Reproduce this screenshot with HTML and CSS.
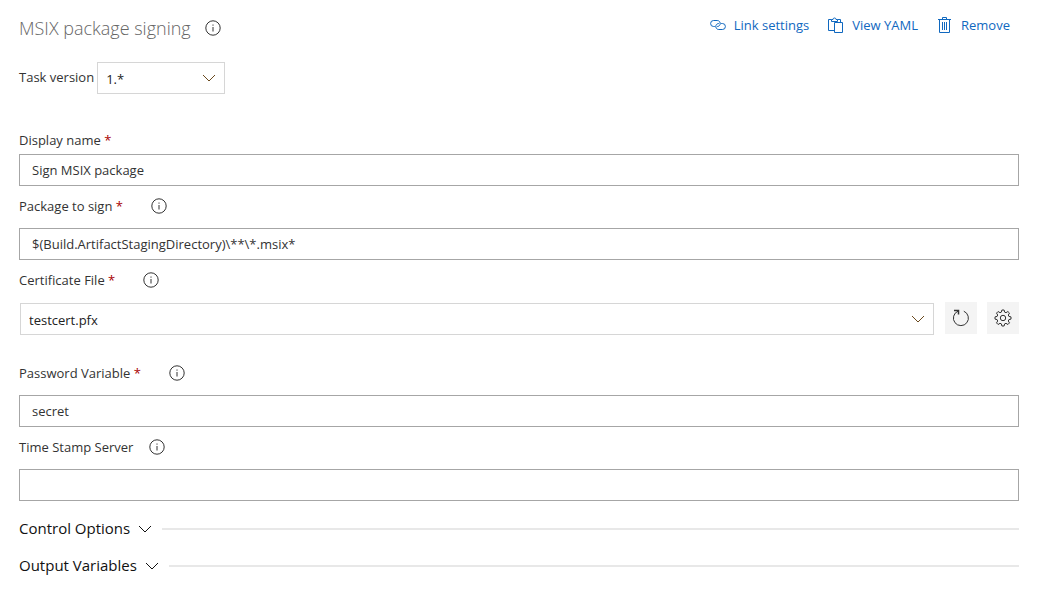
FILE: index.html
```
<!DOCTYPE html>
<html lang="en">

<head>
    <meta charset="UTF-8">
    <meta name="viewport" content="width=device-width, initial-scale=1.0">
    <title>MSIX package signing</title>
    <link rel="stylesheet" href="styles.css">
</head>

<body>

    <!-- Shared icons -->
    <svg class="sprite" aria-hidden="true">
        <symbol id="icon-info" viewBox="0 0 16 16">
            <circle cx="8" cy="8" r="7.200" />
            <path d="M8 7v4.500M8 4.500v1.200" />
        </symbol>
        <symbol id="icon-chevron" viewBox="0 0 14 8">
            <path d="M1 1l6 6 6-6" />
        </symbol>
    </svg>

    <main class="container">
        <header class="header">
            <div class="title">
                <h1>MSIX package signing</h1>
                <button type="button" class="info" aria-label="About this task"><svg><use href="#icon-info" /></svg></button>
            </div>
            <nav class="toolbar">
                <a href="#link">
                    <svg viewBox="0 0 16 16">
                        <path d="M4.800 9.500H3.600a3 3 0 0 1 0-6h3.600a3 3 0 0 1 2.900 3.900c-.4 1.300-1.500 2.100-2.900 2.100" />
                        <path d="M11.200 6.500h1.200a3 3 0 0 1 0 6H8.800a3 3 0 0 1-2.900-3.900c.4-1.300 1.500-2.100 2.900-2.100" />
                    </svg>
                    Link settings
                </a>
                <a href="#yaml">
                    <svg viewBox="0 0 16 16">
                        <path d="M6.500 13.500h-6v-11h3M9.500 2.500h3v3M3.500 4.500v-2h1.500a1.500 1.500 0 0 1 3 0h1.500v2z" />
                        <path d="M6.500 5.500h8v10h-8z" />
                    </svg>
                    View YAML
                </a>
                <a href="#remove">
                    <svg viewBox="0 0 16 16">
                        <path d="M1 2.500h13M5.500 2.500v-2h4v2M2.500 2.500v13h10v-13M5.500 5v8M7.500 5v8M9.500 5v8" />
                    </svg>
                    Remove
                </a>
            </nav>
        </header>

        <form>
            <div class="version">
                <label for="version">Task version</label>
                <div class="select">
                    <select id="version">
                        <option>1.*</option>
                    </select>
                    <svg class="chevron"><use href="#icon-chevron" /></svg>
                </div>
            </div>

            <div class="field">
                <div class="field-label compact">
                    <label for="display-name">Display name <span class="required">*</span></label>
                </div>
                <input type="text" id="display-name" value="Sign MSIX package">
            </div>

            <div class="field">
                <div class="field-label">
                    <label for="package">Package to sign <span class="required">*</span></label>
                    <button type="button" class="info" aria-label="About package to sign"><svg><use href="#icon-info" /></svg></button>
                </div>
                <input type="text" id="package" value="$(Build.ArtifactStagingDirectory)\**\*.msix*">
            </div>

            <div class="field certificate">
                <div class="field-label">
                    <label for="certificate">Certificate File <span class="required">*</span></label>
                    <button type="button" class="info" aria-label="About certificate file"><svg><use href="#icon-info" /></svg></button>
                </div>
                <div class="picker">
                    <div class="select">
                        <select id="certificate">
                            <option>testcert.pfx</option>
                        </select>
                        <svg class="chevron"><use href="#icon-chevron" /></svg>
                    </div>
                    <button type="button" class="icon-button" aria-label="Refresh">
                        <svg viewBox="0 0 18 18">
                            <path d="M11.800 2.200A7.500 7.500 0 1 1 6 2.200" />
                            <path d="M2 1.500h4.500v4" stroke-width="1.500" />
                        </svg>
                    </button>
                    <button type="button" class="icon-button" aria-label="Manage">
                        <svg viewBox="0 0 18 18">
                            <path d="M7.400 3.100L7.900 1h2.200l.5 2.100 1.400.6 1.900-1.200 1.600 1.600-1.200 1.900.6 1.400 2.100.5v2.200l-2.100.5-.6 1.400 1.200 1.900-1.600 1.600-1.900-1.200-1.400.6-.5 2.100H7.900l-.5-2.100-1.400-.6-1.900 1.200-1.600-1.600L3.700 12l-.6-1.400L1 10.100V7.900l2.100-.5L3.700 6 2.500 4.100l1.600-1.600L6 3.700z" />
                            <circle cx="9" cy="9" r="2.700" />
                        </svg>
                    </button>
                </div>
            </div>

            <div class="field">
                <div class="field-label">
                    <label for="password">Password Variable <span class="required">*</span></label>
                    <button type="button" class="info" aria-label="About password variable"><svg><use href="#icon-info" /></svg></button>
                </div>
                <input type="text" id="password" value="secret">
            </div>

            <div class="field">
                <div class="field-label optional">
                    <label for="timestamp">Time Stamp Server</label>
                    <button type="button" class="info" aria-label="About time stamp server"><svg><use href="#icon-info" /></svg></button>
                </div>
                <input type="text" id="timestamp">
            </div>

            <div class="sections">
                <button type="button" class="section" aria-expanded="false">
                    <span>Control Options</span>
                    <svg class="chevron"><use href="#icon-chevron" /></svg>
                </button>
                <button type="button" class="section" aria-expanded="false">
                    <span>Output Variables</span>
                    <svg class="chevron"><use href="#icon-chevron" /></svg>
                </button>
            </div>
        </form>
    </main>

</body>

</html>
```
FILE: styles.css
```
* {
    box-sizing: border-box;
}

body {
    margin: 0;
    background-color: #fff;
    color: #333;
    font-family: "Segoe UI", "Open Sans", sans-serif;
    font-size: 13px;
    line-height: 20px;
}

.sprite {
    position: absolute;
    width: 0;
    height: 0;
}

svg {
    flex: none;
    fill: none;
    stroke: currentColor;
}

button,
input,
select {
    font: inherit;
    color: inherit;
}

.container {
    padding: 10px 18px 0 19px;
}

/* Header */
.header {
    display: flex;
    justify-content: space-between;
    align-items: flex-start;
    height: 52px;
}

.title {
    display: flex;
    align-items: center;
    gap: 14px;
}

h1 {
    margin: 0;
    color: #666;
    font-size: 18px;
    font-weight: 300;
    line-height: 36px;
}

.info {
    display: flex;
    padding: 0;
    border: 0;
    background: none;
}

.info svg {
    width: 16px;
    height: 16px;
}

.toolbar {
    display: flex;
    gap: 19px;
    padding: 5px 9px 0 0;
}

.toolbar a {
    display: flex;
    align-items: center;
    gap: 8px;
    color: #1068bf;
    text-decoration: none;
}

.toolbar svg {
    width: 16px;
    height: 16px;
}

/* Drop-downs */
.select {
    position: relative;
    flex: 1;
}

.select select {
    display: block;
    width: 100%;
    height: 32px;
    padding: 2px 32px 0 8px;
    border: 1px solid #d6d6d6;
    border-radius: 0;
    background-color: #fff;
    color: #222;
    appearance: none;
}

.chevron {
    width: 14px;
    height: 8px;
}

.select .chevron {
    position: absolute;
    top: 12px;
    right: 9px;
    color: #6b4a1e;
    pointer-events: none;
}

.version {
    display: flex;
    gap: 3px;
    margin-bottom: 32px;
}

.version label {
    line-height: 30px;
}

.version .select {
    flex: 0 0 128px;
}

/* Fields */
.field-label {
    display: flex;
    align-items: center;
    gap: 28px;
    height: 42px;
    padding-bottom: 2px;
}

.field-label.compact {
    height: 28px;
    padding-bottom: 0;
}

.field-label.optional {
    gap: 16px;
}

.required {
    color: #a80000;
}

input {
    display: block;
    width: 100%;
    height: 32px;
    padding: 1px 12px;
    border: 1px solid #a6a6a6;
    border-radius: 0;
    background-color: #fff;
}

.certificate {
    margin-bottom: 18px;
}

.picker {
    display: flex;
    gap: 10px;
}

.picker .select {
    padding: 1px 1px 0;
}

.picker .chevron {
    right: 10px;
    top: 13px;
}

.icon-button {
    display: flex;
    align-items: center;
    justify-content: center;
    width: 32px;
    height: 32px;
    padding: 0;
    border: 0;
    background-color: #f4f4f4;
}

.icon-button svg {
    width: 18px;
    height: 18px;
}

/* Collapsed sections */
.sections {
    margin-top: 9px;
}

.section {
    display: flex;
    align-items: center;
    gap: 8px;
    width: 100%;
    height: 37px;
    padding: 0;
    border: 0;
    background: none;
    color: #111;
    font-size: 15px;
}

.section span {
    padding-bottom: 2px;
}

/* Rule that fills the rest of the row */
.section::after {
    content: "";
    flex: 1;
    height: 2px;
    margin-left: 2px;
    background-color: #e8e8e8;
}
```
